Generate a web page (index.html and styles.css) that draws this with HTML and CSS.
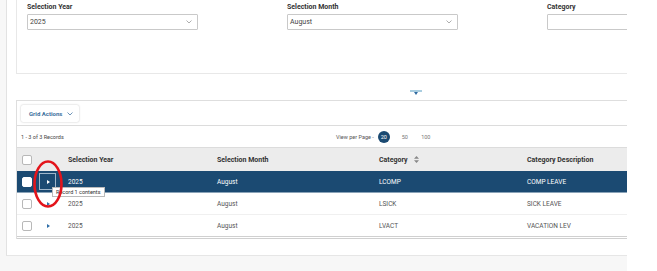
FILE: index.html
```html
<!DOCTYPE html>
<html lang="en">
<head>
  <meta charset="UTF-8">
  <title>Selection Categories</title>
  <link rel="stylesheet" href="styles.css">
</head>
<body>
  <div class="app">
    <div class="page">
      <div class="filter-panel">
        <div class="field">
          <label>Selection Year</label>
          <div class="select">2025
            <svg class="chev" width="6" height="4" viewBox="0 0 6 4"><path d="M0.5 0.5 L3 3 L5.5 0.5" fill="none" stroke="#999" stroke-width="0.8"/></svg>
          </div>
        </div>
        <div class="field">
          <label>Selection Month</label>
          <div class="select">August
            <svg class="chev" width="6" height="4" viewBox="0 0 6 4"><path d="M0.5 0.5 L3 3 L5.5 0.5" fill="none" stroke="#999" stroke-width="0.8"/></svg>
          </div>
        </div>
        <div class="field">
          <label>Category</label>
          <div class="select wide"></div>
        </div>
      </div>

      <div class="splitter">
        <span class="split-icon"><span class="bar"></span><span class="dot"></span></span>
      </div>

      <div class="grid-panel">
        <div class="toolbar">
          <button class="grid-actions">Grid Actions
            <svg width="6" height="4" viewBox="0 0 6 4"><path d="M0.5 0.5 L3 3 L5.5 0.5" fill="none" stroke="#4a7aa6" stroke-width="0.8"/></svg>
          </button>
        </div>
        <div class="info-row">
          <span class="records">1 - 3 of 3 Records</span>
          <span class="pager">
            View per Page -
            <span class="page-size active">20</span>
            <span class="page-size">50</span>
            <span class="page-size">100</span>
          </span>
        </div>

        <table class="grid">
          <thead>
            <tr>
              <th class="c-check"><span class="checkbox"></span></th>
              <th class="c-expand"></th>
              <th class="c-year">Selection Year</th>
              <th class="c-month">Selection Month</th>
              <th class="c-cat">Category
                <svg class="sort" width="5" height="7" viewBox="0 0 5 7"><path d="M2.5 0 L5 2.8 L0 2.8 Z M2.5 7 L5 4.2 L0 4.2 Z" fill="#888"/></svg>
              </th>
              <th class="c-desc">Category Description</th>
            </tr>
          </thead>
          <tbody>
            <tr class="selected">
              <td class="c-check"><span class="checkbox"></span></td>
              <td class="c-expand">
                <span class="expand-btn"><span class="tri"></span></span>
                <span class="tooltip">Record 1 contents</span>
              </td>
              <td>2025</td>
              <td>August</td>
              <td>LCOMP</td>
              <td>COMP LEAVE</td>
            </tr>
            <tr>
              <td class="c-check"><span class="checkbox"></span></td>
              <td class="c-expand"><span class="tri"></span></td>
              <td>2025</td>
              <td>August</td>
              <td>LSICK</td>
              <td>SICK LEAVE</td>
            </tr>
            <tr>
              <td class="c-check"><span class="checkbox"></span></td>
              <td class="c-expand"><span class="tri"></span></td>
              <td>2025</td>
              <td>August</td>
              <td>LVACT</td>
              <td>VACATION LEV</td>
            </tr>
          </tbody>
        </table>
      </div>

      <svg class="highlight-ring" width="34" height="50" viewBox="0 0 34 50">
        <ellipse cx="17" cy="25" rx="13.5" ry="22.5" fill="none" stroke="#e3141b" stroke-width="2.6"/>
      </svg>
    </div>
  </div>
</body>
</html>
```

FILE: styles.css
```css
body {
  margin: 0;
  background-color: #ffffff;
  font-family: Roboto, "Liberation Sans", Arial, sans-serif;
  color: #444;
}

.app {
  width: 627px;
  height: 271px;
  overflow: hidden;
  background-color: #f7f7f7;
  padding-left: 6px;
  box-sizing: border-box;
}

.page {
  position: relative;
  width: 830px;
  height: 256px;
  background-color: #ffffff;
  border-left: 1px solid #e2e2e2;
  border-bottom: 1px solid #e6e6e6;
  padding-left: 9px;
  box-sizing: border-box;
}

/* filters */
.filter-panel {
  width: 800px;
  height: 74px;
  box-sizing: border-box;
  border-left: 1px solid #e8e8e8;
  border-bottom: 1px solid #e8e8e8;
  padding: 3px 0 0 10px;
  display: flex;
  gap: 89px;
}

.field {
  display: flex;
  flex-direction: column;
  width: 171px;
}

.field label {
  font-size: 7px;
  font-weight: bold;
  color: #333;
  height: 8px;
  line-height: 8px;
  margin-bottom: 3px;
}

.select {
  height: 16px;
  box-sizing: border-box;
  border: 1px solid #c9c9c9;
  border-radius: 1px;
  font-size: 7px;
  line-height: 14px;
  padding-left: 2px;
  color: #444;
  display: flex;
  justify-content: space-between;
  align-items: center;
}

.chev {
  margin-right: 5px;
}

/* splitter */
.splitter {
  width: 800px;
  height: 26px;
  display: flex;
  justify-content: center;
  align-items: flex-end;
  padding-bottom: 5px;
  box-sizing: border-box;
}

.split-icon {
  display: flex;
  flex-direction: column;
  align-items: center;
}

.split-icon .bar {
  width: 12px;
  height: 2px;
  background-color: #a9cde0;
}

.split-icon .dot {
  width: 0;
  height: 0;
  border-left: 2px solid transparent;
  border-right: 2px solid transparent;
  border-top: 3px solid #2f6aa0;
}

/* grid */
.grid-panel {
  width: 800px;
  border-left: 1px solid #dedede;
  border-top: 1px solid #dedede;
  box-sizing: border-box;
}

.toolbar {
  height: 25px;
  border-bottom: 1px solid #dcdcdc;
  padding: 4px 0 0 4px;
  box-sizing: border-box;
}

.grid-actions {
  height: 17px;
  width: 58px;
  border: none;
  border-radius: 2px;
  background-color: #fff;
  box-shadow: 0 0 2px rgba(0, 0, 0, 0.25);
  font-family: inherit;
  font-size: 6px;
  font-weight: bold;
  color: #3c6f9d;
  display: flex;
  align-items: center;
  gap: 5px;
  padding: 0 0 0 8px;
}

.info-row {
  height: 21px;
  border-bottom: 1px solid #dcdcdc;
  display: flex;
  align-items: center;
  font-size: 5.5px;
  color: #444;
  padding-left: 4px;
}

.records {
  width: 315px;
}

.pager {
  display: flex;
  align-items: center;
  color: #555;
}

.page-size {
  width: 12px;
  height: 12px;
  border-radius: 50%;
  display: inline-flex;
  justify-content: center;
  align-items: center;
  margin-left: 9px;
  color: #777;
}

.page-size.active {
  background-color: #1b4a72;
  color: #fff;
  margin-left: 4px;
}

.grid {
  border-collapse: collapse;
  table-layout: fixed;
  width: 799px;
  font-size: 6.5px;
  border-bottom: 3px double #d0d0d0;
}

.grid th, .grid td {
  padding: 0;
  text-align: left;
  white-space: nowrap;
}

.grid th {
  height: 23px;
  background-color: #ececec;
  font-size: 7px;
  font-weight: bold;
  color: #333;
}

.grid td {
  height: 21px;
  border-bottom: 1px solid #f0f0f0;
  color: #555;
}

.c-check { width: 17px; padding-left: 5px !important; }
.c-expand { width: 29px; position: relative; }
.c-year { width: 149px; }
.c-month { width: 162px; }
.c-cat { width: 148px; }

.sort {
  margin-left: 5px;
  vertical-align: -1px;
}

.checkbox {
  display: block;
  width: 8px;
  height: 8px;
  border: 1px solid #b8b8b8;
  border-radius: 2px;
  background-color: #fff;
}

.tri {
  display: inline-block;
  width: 0;
  height: 0;
  border-top: 2.5px solid transparent;
  border-bottom: 2.5px solid transparent;
  border-left: 3px solid #2f6fa8;
  margin-left: 8px;
}

tr.selected td {
  background-color: #1b4a72;
  color: #fff;
  border-bottom: 1px solid #8aa3b8;
}

tr.selected .checkbox {
  border-color: #fff;
}

.expand-btn {
  display: flex;
  justify-content: center;
  align-items: center;
  width: 17px;
  height: 17px;
  border: 1px solid #9fb6ca;
  box-sizing: border-box;
}

.expand-btn .tri {
  border-left-color: #fff;
  margin-left: 1px;
}

.tooltip {
  position: absolute;
  left: 13px;
  top: 16px;
  z-index: 2;
  background-color: #fff;
  border: 1px solid #bbb;
  color: #333;
  font-size: 5.5px;
  line-height: 8px;
  padding: 0 3px;
  white-space: nowrap;
}

.highlight-ring {
  position: absolute;
  left: 24px;
  top: 159px;
  z-index: 3;
}
```
